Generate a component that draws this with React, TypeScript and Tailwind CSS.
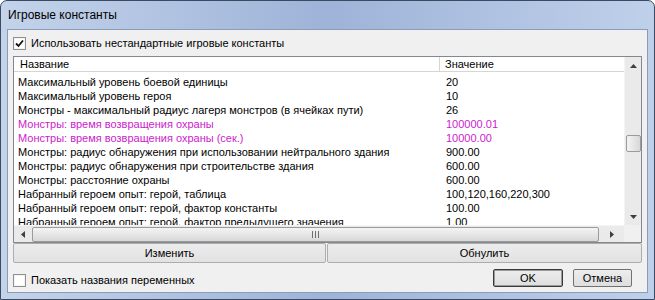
import React from "react";

// rows of the constants list: [name, value, highlighted]
const rows: [string, string, boolean][] = [
  ["Максимальный уровень боевой единицы", "20", false],
  ["Максимальный уровень героя", "10", false],
  ["Монстры - максимальный радиус лагеря монстров (в ячейках пути)", "26", false],
  ["Монстры: время возвращения охраны", "100000.01", true],
  ["Монстры: время возвращения охраны (сек.)", "10000.00", true],
  ["Монстры: радиус обнаружения при использовании нейтрального здания", "900.00", false],
  ["Монстры: радиус обнаружения при строительстве здания", "600.00", false],
  ["Монстры: расстояние охраны", "600.00", false],
  ["Набранный героем опыт: герой, таблица", "100,120,160,220,300", false],
  ["Набранный героем опыт: герой, фактор константы", "100.00", false],
  ["Набранный героем опыт: герой, фактор предыдущего значения", "1.00", false],
];

function Arrow({ dir }: { dir: "up" | "down" | "left" | "right" }) {
  const pts = {
    up: "0,4 7,4 3.5,0",
    down: "0,0 7,0 3.5,4",
    left: "4,0 4,7 0,3.5",
    right: "0,0 0,7 4,3.5",
  }[dir];
  const vertical = dir === "up" || dir === "down";
  return (
    <svg width={vertical ? 7 : 4} height={vertical ? 4 : 7} viewBox={vertical ? "0 0 7 4" : "0 0 4 7"}>
      <polygon points={pts} fill="#3f3f3f" />
    </svg>
  );
}

function CheckBox({ checked }: { checked?: boolean }) {
  return (
    <div className="w-[13px] h-[13px] border border-[#8e8f8f] bg-gradient-to-br from-[#dcdcdc] to-white flex items-center justify-center shrink-0">
      <div className="w-[11px] h-[11px] border border-[#f4f4f4] bg-white flex items-center justify-center">
        {checked && (
          <svg width="9" height="9" viewBox="0 0 9 9">
            <path d="M1 4.5 L3.5 7 L8 1.5" stroke="#111" strokeWidth="1.8" fill="none" />
          </svg>
        )}
      </div>
    </div>
  );
}

export default function App() {
  return (
    <div
      className="w-[655px] h-[300px] overflow-hidden bg-white text-[11px] text-black"
      style={{ fontFamily: '"Liberation Sans", Tahoma, Arial, sans-serif' }}
    >
      <div className="w-full h-full rounded-t-[7px] border border-[#3b4a63] bg-gradient-to-r from-[#c3d3ea] via-[#9eb3d8] to-[#bfd0ea] flex flex-col">
        {/* Title bar */}
        <div className="h-[28px] flex items-center pl-[7px] text-[12px] shrink-0">Игровые константы</div>

        {/* Client area */}
        <div className="ml-[6px] w-[641px] flex-1 mb-[6px] border border-[#8a9cb8] bg-[#f0f0f0] flex flex-col">
          <div className="flex items-center mt-[7px] ml-[5px] gap-[5px] h-[13px]">
            <CheckBox checked />
            <span>Использовать нестандартные игровые константы</span>
          </div>

          {/* List */}
          <div className="ml-[5px] mt-[6px] w-[629px] h-[187px] border border-[#828790] bg-white flex flex-col">
            <div className="flex flex-1 min-h-0">
              <div className="flex-1 flex flex-col overflow-hidden">
                <div className="h-[15px] flex border-b border-[#d5d5d5] shrink-0">
                  <div className="w-[426px] border-r border-[#d5d5d5] pl-[6px] leading-[14px]">Название</div>
                  <div className="pl-[5px] leading-[14px]">Значение</div>
                </div>
                <div className="pt-[3px] overflow-hidden">
                  {rows.map(([name, value, hl]) => (
                    <div key={name} className={`h-[14px] flex leading-[14px] whitespace-nowrap ${hl ? "text-[#cc22cc]" : ""}`}>
                      <div className="w-[432px] pl-[4px] overflow-hidden">{name}</div>
                      <div>{value}</div>
                    </div>
                  ))}
                </div>
              </div>
              {/* vertical scrollbar */}
              <div className="w-[17px] bg-[#eaeaea] border-l border-[#f4f4f4] flex flex-col items-center">
                <div className="h-[17px] w-full flex items-center justify-center">
                  <Arrow dir="up" />
                </div>
                <div className="mt-[61px] w-[15px] h-[17px] rounded-[2px] border border-[#9b9b9b] bg-gradient-to-r from-[#f4f4f4] to-[#d8d8d8]" />
                <div className="flex-1" />
                <div className="h-[17px] w-full flex items-center justify-center">
                  <Arrow dir="down" />
                </div>
              </div>
            </div>
            {/* horizontal scrollbar */}
            <div className="h-[17px] flex shrink-0">
              <div className="flex-1 bg-[#eaeaea] border-t border-[#f4f4f4] flex items-center">
                <div className="w-[17px] flex justify-center">
                  <Arrow dir="left" />
                </div>
                <div className="ml-px w-[567px] h-[15px] rounded-[2px] border border-[#9b9b9b] bg-gradient-to-b from-[#f4f4f4] to-[#d8d8d8] flex items-center justify-center gap-[2px]">
                  <div className="w-px h-[7px] bg-[#6f6f6f]" />
                  <div className="w-px h-[7px] bg-[#6f6f6f]" />
                  <div className="w-px h-[7px] bg-[#6f6f6f]" />
                </div>
                <div className="flex-1 flex justify-center">
                  <Arrow dir="right" />
                </div>
              </div>
              <div className="w-[17px] bg-[#f0f0f0]" />
            </div>
          </div>

          {/* Edit / reset buttons */}
          <div className="ml-[5px] flex gap-px h-[20px]">
            <button className="w-[313px] h-full rounded-[2px] border border-[#adadad] bg-gradient-to-b from-[#ececec] to-[#e2e2e2]">Изменить</button>
            <button className="w-[315px] h-full rounded-[2px] border border-[#adadad] bg-gradient-to-b from-[#ececec] to-[#e2e2e2]">Обнулить</button>
          </div>

          {/* Bottom row */}
          <div className="flex items-start">
            <div className="flex items-center mt-[11px] ml-[5px] gap-[5px] h-[13px]">
              <CheckBox />
              <span>Показать названия переменных</span>
            </div>
            <div className="flex-1" />
            <button className="mt-[6px] w-[70px] h-[18px] rounded-[2px] border border-[#3a3a3a] shadow-[inset_0_0_0_1px_#9a9a9a] bg-gradient-to-b from-[#ededed] to-[#dedede]">OK</button>
            <button className="mt-[6px] ml-[10px] mr-[15px] w-[59px] h-[18px] rounded-[2px] border border-[#707070] bg-gradient-to-b from-[#ededed] to-[#dedede]">Отмена</button>
          </div>
        </div>
      </div>
    </div>
  );
}
